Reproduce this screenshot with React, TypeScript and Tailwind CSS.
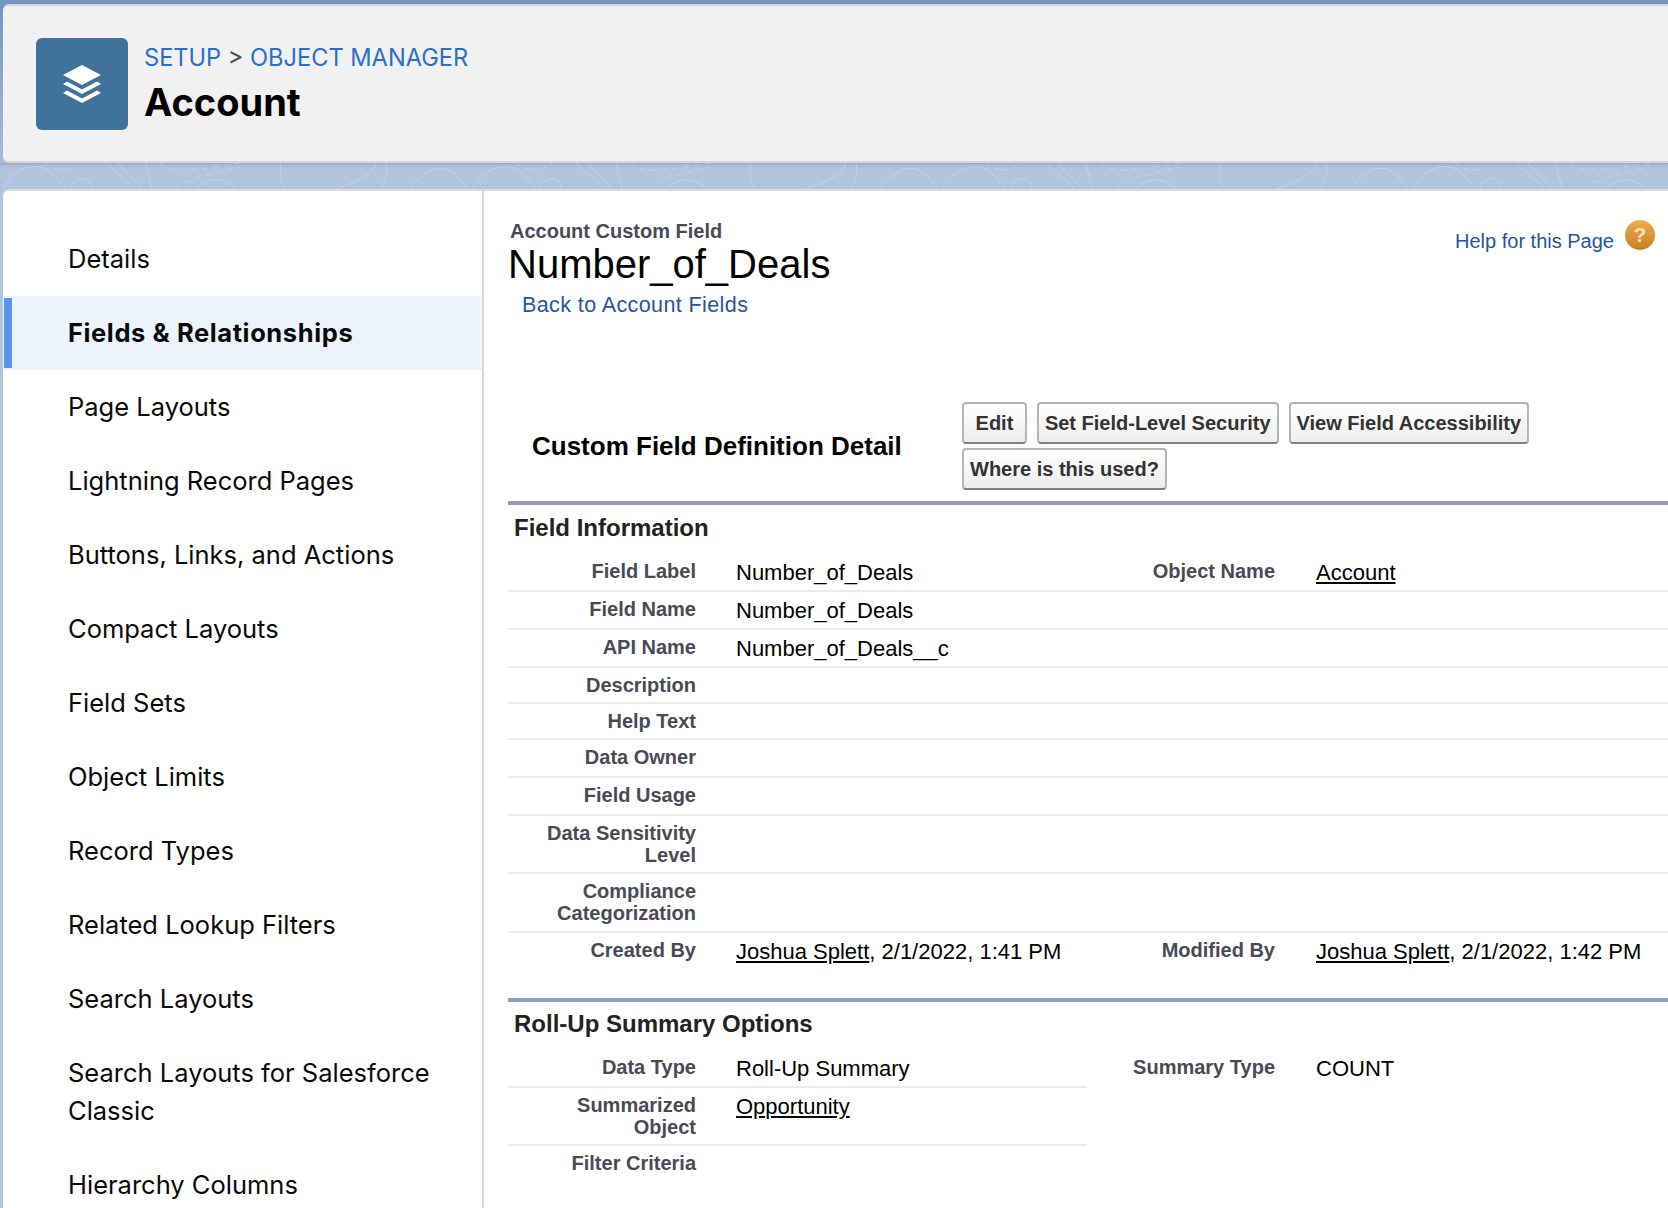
import React from "react";

const nav = ["Details","Fields & Relationships","Page Layouts","Lightning Record Pages","Buttons, Links, and Actions","Compact Layouts","Field Sets","Object Limits","Record Types","Related Lookup Filters","Search Layouts","Search Layouts for Salesforce Classic","Hierarchy Columns"];

function Label({ children, w }: { children: React.ReactNode; w: string }) {
  return <div className={`${w} shrink-0 text-right font-bold text-[20px] leading-[22px] text-[#4a4a56]`}>{children}</div>;
}

function Row({ label, value, rl, rv, h }: { label: React.ReactNode; value?: React.ReactNode; rl?: string; rv?: React.ReactNode; h: string }) {
  return (
    <div className={`flex ${h} border-b-2 border-[#ececec] pt-[6px]`}>
      <Label w="w-[188px]">{label}</Label>
      <div className="ml-[40px] w-[340px] shrink-0 text-[22px] leading-[26px] text-black">{value}</div>
      {rl && <Label w="w-[199px]">{rl}</Label>}
      {rv && <div className="ml-[41px] text-[22px] leading-[26px] text-black whitespace-nowrap">{rv}</div>}
    </div>
  );
}

function Btn({ children }: { children: React.ReactNode }) {
  return (
    <button className="h-[42px] rounded-[4px] border-2 border-[#b5b5b5] border-b-[#7f7f7f] bg-gradient-to-b from-white to-[#ededed] px-[6px] text-[20px] font-bold text-[#333] whitespace-nowrap">{children}</button>
  );
}

function Topo() {
  return (
    <svg className="absolute inset-0 h-full w-full" fill="none" stroke="#ffffff" strokeOpacity="0.22" strokeWidth="1">
      <defs>
        <pattern id="topo" width="470" height="27" patternUnits="userSpaceOnUse">
          <path d="M2 26 C14 8 26 2 40 4 C52 6 58 18 66 26" />
          <path d="M70 26 C72 16 84 12 90 20 L92 26" />
          <path d="M46 0 C54 8 70 10 82 0" strokeDasharray="5 4" />
          <path d="M106 0 C116 10 130 20 134 26" />
          <path d="M118 0 C126 10 136 18 142 26" />
          <path d="M146 0 C148 10 150 18 152 26" />
          <path d="M160 0 C170 12 200 6 240 0" strokeDasharray="6 5" />
          <path d="M176 26 C184 16 214 10 240 4" strokeDasharray="6 5" />
          <path d="M196 26 C206 14 226 14 236 26" />
          <path d="M280 0 C282 10 276 16 286 26" />
          <path d="M336 26 C352 20 372 14 376 0" />
          <path d="M386 0 C388 10 386 18 380 26" />
          <path d="M410 26 C420 14 432 2 446 6 C456 8 462 20 468 26" />
        </pattern>
      </defs>
      <rect width="100%" height="100%" fill="url(#topo)" stroke="none" />
    </svg>
  );
}

export default function App() {
  return (
    <div className="relative h-[1208px] overflow-hidden bg-[#b3c4de] font-['Liberation_Sans',sans-serif]">
      <div className="h-[4px] bg-[#7397c2]" />
      <div className="bg-gradient-to-b from-[#7397c2] to-[#a9bcd9]">
        <header className="ml-[3px] flex h-[159px] items-start rounded-l-[6px] border-t-2 border-b-2 border-[#d6d6d6] bg-[#f1f1f1] pl-[33px] pt-[32px]">
          <div className="flex h-[92px] w-[92px] items-center justify-center rounded-[6px] bg-[#40729c]">
            <svg width="38" height="38" viewBox="0 0 38 38" fill="#fff">
              <path d="M19 0 L38 10 L19 20 L0 10 Z" />
              <path d="M4 16.5 L19 24.5 L34 16.5 L38 19 L19 29 L0 19 Z" />
              <path d="M4 25.5 L19 33.5 L34 25.5 L38 28 L19 38 L0 28 Z" />
            </svg>
          </div>
          <div className="ml-[16px] font-['Inter',sans-serif]">
            <div className="mt-[4px] text-[23.6px] leading-[32px] text-[#4a4a4a]">
              <span className="text-[#2a6fc9]">SETUP</span> &gt; <span className="text-[#2a6fc9]">OBJECT MANAGER</span>
            </div>
            <div className="mt-[5px] text-[38px] leading-[46px] font-bold text-black">Account</div>
          </div>
        </header>
      </div>
      <div className="relative h-[26px] shadow-[inset_0_4px_4px_-3px_rgba(70,90,130,0.35)]"><Topo /></div>
      <div className="ml-[3px] flex h-[1100px] rounded-tl-[6px] border-t-2 border-[#dcdcdc] bg-white">
        <nav className="w-[481px] shrink-0 border-r-2 border-[#d8d8d8] pt-[31px] font-['Inter',sans-serif] text-[25.5px] text-[#0a0a0a]">
          {nav.map((n) => {
            const active = n === "Fields & Relationships";
            return (
              <div key={n} className={`relative py-[18px] pl-[65px] pr-[40px] leading-[38px] ${active ? "bg-[#ecf3fd] font-bold tracking-[0.6px]" : ""}`}>
                {active && <span className="absolute left-[1px] top-[2px] bottom-[2px] w-[8px] bg-[#5a93f0]" />}
                {n}
              </div>
            );
          })}
        </nav>
        <main className="relative flex-1 pl-[24px] pt-[29px]">
          <div className="absolute right-0 top-[29px] flex items-start gap-[11px] pr-[13px]">
            <span className="mt-[6px] text-[20px] text-[#23579f]">Help for this Page</span>
            <span className="flex h-[30px] w-[30px] items-center justify-center rounded-full bg-gradient-to-b from-[#f2ad4e] to-[#c47f1f] text-[21px] font-bold text-[#f6e3c0]">?</span>
          </div>
          <div className="pl-[2px] text-[20px] leading-[22px] font-bold text-[#4a4a56]">Account Custom Field</div>
          <div className="text-[40px] leading-[44px] text-black">Number_of_Deals</div>
          <div className="ml-[14px] mt-[6px] text-[21.5px] leading-[26px] tracking-[0.4px] text-[#23579f]">Back to Account Fields</div>
          <div className="mt-[84px] flex h-[99px]">
            <div className="w-[454px] shrink-0 pl-[24px] pt-[29px] text-[26px] leading-[30px] font-bold text-black">Custom Field Definition Detail</div>
            <div className="w-[600px]">
              <div className="flex gap-[10px]"><Btn>&nbsp;Edit&nbsp;</Btn><Btn>Set Field-Level Security</Btn><Btn>View Field Accessibility</Btn></div>
              <div className="mt-[4px]"><Btn>Where is this used?</Btn></div>
            </div>
          </div>
          <div className="h-[4px] bg-[#8f9dc0]" />
          <div className="h-[49px] pl-[6px] pt-[9px] text-[24px] leading-[28px] font-bold text-[#222]">Field Information</div>
          <Row h="h-[38px]" label="Field Label" value="Number_of_Deals" rl="Object Name" rv={<u>Account</u>} />
          <Row h="h-[38px]" label="Field Name" value="Number_of_Deals" />
          <Row h="h-[38px]" label="API Name" value="Number_of_Deals__c" />
          <Row h="h-[36px]" label="Description" />
          <Row h="h-[36px]" label="Help Text" />
          <Row h="h-[38px]" label="Data Owner" />
          <Row h="h-[38px]" label="Field Usage" />
          <Row h="h-[58px]" label={<>Data Sensitivity<br />Level</>} />
          <Row h="h-[59px]" label={<>Compliance<br />Categorization</>} />
          <div className="flex h-[65px] pt-[6px]">
            <Label w="w-[188px]">Created By</Label>
            <div className="ml-[40px] w-[340px] shrink-0 text-[22px] leading-[26px]"><u>Joshua Splett</u>, 2/1/2022, 1:41 PM</div>
            <Label w="w-[199px]">Modified By</Label>
            <div className="ml-[41px] text-[22px] leading-[26px] whitespace-nowrap"><u>Joshua Splett</u>, 2/1/2022, 1:42 PM</div>
          </div>
          <div className="h-[4px] bg-[#8f9dc0]" />
          <div className="h-[48px] pl-[6px] pt-[8px] text-[24px] leading-[28px] font-bold text-[#222]">Roll-Up Summary Options</div>
          <div className="flex">
            <div className="w-[579px] shrink-0">
              <div className="flex h-[38px] border-b-2 border-[#ececec] pt-[6px]">
                <Label w="w-[188px]">Data Type</Label>
                <div className="ml-[40px] text-[22px] leading-[26px]">Roll-Up Summary</div>
              </div>
              <div className="flex h-[58px] border-b-2 border-[#ececec] pt-[6px]">
                <Label w="w-[188px]">Summarized<br />Object</Label>
                <div className="ml-[40px] text-[22px] leading-[26px]"><u>Opportunity</u></div>
              </div>
              <div className="flex pt-[6px]">
                <Label w="w-[188px]">Filter Criteria</Label>
              </div>
            </div>
            <div className="flex pt-[6px]">
              <Label w="w-[188px]">Summary Type</Label>
              <div className="ml-[41px] text-[22px] leading-[26px]">COUNT</div>
            </div>
          </div>
        </main>
      </div>
    </div>
  );
}
